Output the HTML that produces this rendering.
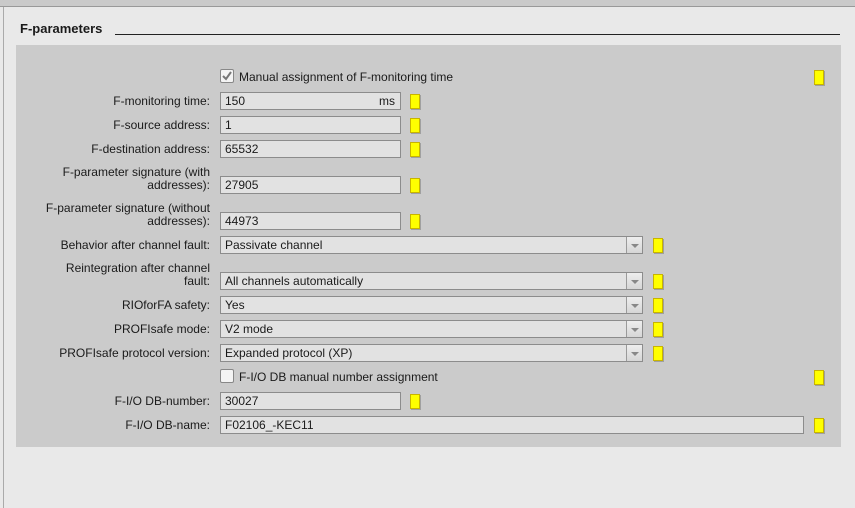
<!DOCTYPE html><html><head><style>
body{margin:0;width:855px;height:508px;background:#e9e9e9;font-family:"Liberation Sans","DejaVu Sans",sans-serif;font-size:12px;color:#1a1a1a;position:relative;overflow:hidden}
.a{position:absolute}
.lbl{position:absolute;right:645px;text-align:right;line-height:13px}
.in{position:absolute;left:220px;height:16px;background:#e2e2e2;border:1px solid #8c8c8c;line-height:16px;padding-left:4px;box-sizing:content-box}
.y{position:absolute;width:8px;height:13px;background:#ffff00;border:1px solid #c8b400;box-shadow:1px 1px 0 #a0a0a0}
.dd{width:417px}
.arr{position:absolute;right:0;top:0;width:15px;height:16px;border-left:1px solid #9a9a9a;background:linear-gradient(#eee,#d6d6d6)}
.arr:after{content:"";position:absolute;left:4px;top:7px;border-left:4px solid transparent;border-right:4px solid transparent;border-top:4px solid #888}
.cb{position:absolute;left:220px;width:12px;height:12px;border:1px solid #888;background:#f4f4f4;border-radius:2px}
</style></head><body>
<div class="a" style="left:0;top:0;width:855px;height:6px;background:#cacaca;border-bottom:1px solid #999"></div>
<div class="a" style="left:3px;top:7px;width:1px;height:501px;background:#aaa"></div>
<div class="a" style="left:20px;top:21px;font-weight:bold;font-size:13px">F-parameters</div>
<div class="a" style="left:115px;top:34px;width:725px;height:1px;background:#222"></div>
<div class="a" style="left:16px;top:45px;width:825px;height:402px;background:#cbcbcb"></div>

<div class="cb" style="top:69px"><svg width="12" height="12" style="position:absolute;left:0;top:0"><path d="M2 6 L5 9 L10 2" stroke="#777" stroke-width="2" fill="none"/></svg></div>
<div class="a" style="left:239px;top:70px">Manual assignment of F-monitoring time</div>
<div class="y" style="left:814px;top:70px"></div>

<div class="lbl" style="top:95px">F-monitoring time:</div>
<div class="in" style="top:92px;width:175px">150<span style="position:absolute;right:5px">ms</span></div>
<div class="y" style="left:410px;top:94px"></div>

<div class="lbl" style="top:119px">F-source address:</div>
<div class="in" style="top:116px;width:175px">1</div>
<div class="y" style="left:410px;top:118px"></div>

<div class="lbl" style="top:143px">F-destination address:</div>
<div class="in" style="top:140px;width:175px">65532</div>
<div class="y" style="left:410px;top:142px"></div>

<div class="lbl" style="top:166px">F-parameter signature (with<br>addresses):</div>
<div class="in" style="top:176px;width:175px">27905</div>
<div class="y" style="left:410px;top:178px"></div>

<div class="lbl" style="top:202px">F-parameter signature (without<br>addresses):</div>
<div class="in" style="top:212px;width:175px">44973</div>
<div class="y" style="left:410px;top:214px"></div>

<div class="lbl" style="top:239px">Behavior after channel fault:</div>
<div class="in dd" style="top:236px">Passivate channel<div class="arr"></div></div>
<div class="y" style="left:653px;top:238px"></div>

<div class="lbl" style="top:262px">Reintegration after channel<br>fault:</div>
<div class="in dd" style="top:272px">All channels automatically<div class="arr"></div></div>
<div class="y" style="left:653px;top:274px"></div>

<div class="lbl" style="top:299px">RIOforFA safety:</div>
<div class="in dd" style="top:296px">Yes<div class="arr"></div></div>
<div class="y" style="left:653px;top:298px"></div>

<div class="lbl" style="top:323px">PROFIsafe mode:</div>
<div class="in dd" style="top:320px">V2 mode<div class="arr"></div></div>
<div class="y" style="left:653px;top:322px"></div>

<div class="lbl" style="top:347px">PROFIsafe protocol version:</div>
<div class="in dd" style="top:344px">Expanded protocol (XP)<div class="arr"></div></div>
<div class="y" style="left:653px;top:346px"></div>

<div class="cb" style="top:369px"></div>
<div class="a" style="left:239px;top:370px">F-I/O DB manual number assignment</div>
<div class="y" style="left:814px;top:370px"></div>

<div class="lbl" style="top:395px">F-I/O DB-number:</div>
<div class="in" style="top:392px;width:175px">30027</div>
<div class="y" style="left:410px;top:394px"></div>

<div class="lbl" style="top:419px">F-I/O DB-name:</div>
<div class="in" style="top:416px;width:578px">F02106_-KEC11</div>
<div class="y" style="left:814px;top:418px"></div>
</body></html>
